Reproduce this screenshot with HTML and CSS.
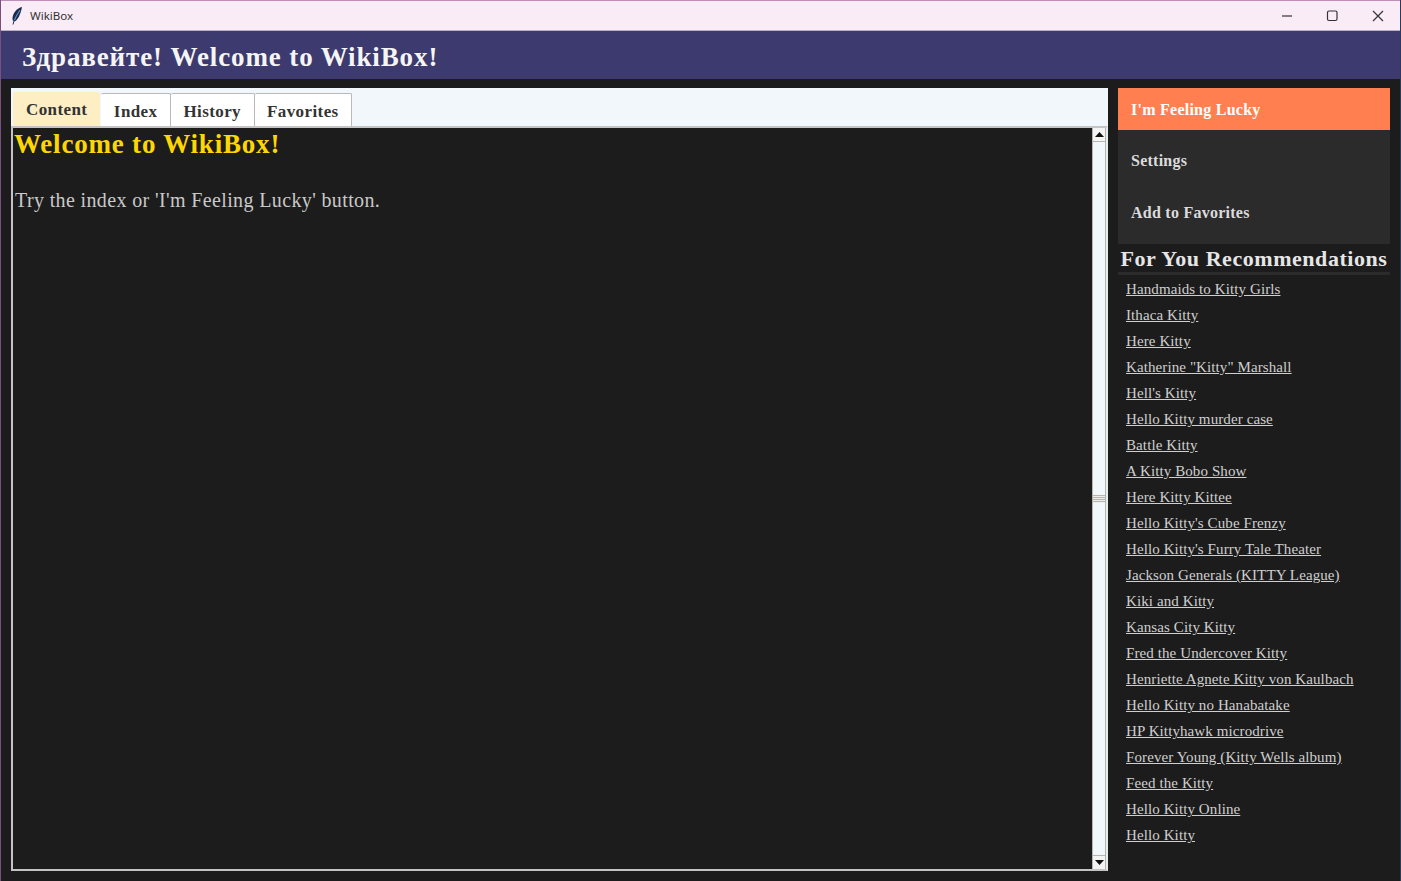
FILE: index.html
```html
<!DOCTYPE html>
<html lang="en">
<head>
<meta charset="utf-8">
<title>WikiBox</title>
<link rel="stylesheet" href="styles.css">
</head>
<body>
<div class="window">
  <div class="titlebar">
    <svg class="feather" width="12" height="18" viewBox="0 0 12 18"><path d="M11 0C6 1 2 6 1.500 11C1.400 12.500 1.800 13.500 2.500 14L1.500 17.500L2.500 17.500L3.300 14.500C6.500 13.500 9.500 8 11 0Z" fill="#1d2a4a"/><path d="M9 3C7 6 5 9 3.500 13" stroke="#5b8fd0" stroke-width="1.200" fill="none"/></svg>
    <span class="app-name">WikiBox</span>
    <div class="win-controls">
      <svg class="win-icon" width="46" height="30" viewBox="0 0 46 30"><path d="M20 15H30" stroke="#333" stroke-width="1.200"/></svg>
      <svg class="win-icon" width="46" height="30" viewBox="0 0 46 30"><rect x="19.500" y="10" width="9.500" height="9.500" rx="1.500" fill="none" stroke="#333" stroke-width="1.200"/></svg>
      <svg class="win-icon" width="46" height="30" viewBox="0 0 46 30"><path d="M19 10L29 20M29 10L19 20" stroke="#333" stroke-width="1.200"/></svg>
    </div>
  </div>
  <header class="banner">Здравейте! Welcome to WikiBox!</header>
  <main class="main">
    <section class="left">
      <nav class="tabs">
        <span class="tab active">Content</span>
        <span class="tab">Index</span>
        <span class="tab">History</span>
        <span class="tab">Favorites</span>
      </nav>
      <div class="content-frame">
        <div class="content">
          <h1 class="content-title">Welcome to WikiBox!</h1>
          <p class="content-text">Try the index or 'I'm Feeling Lucky' button.</p>
        </div>
        <div class="scrollbar">
          <div class="sb-btn"><svg width="9" height="5" viewBox="0 0 9 5"><path d="M4.500 0L9 5H0Z" fill="#111"/></svg></div>
          <div class="sb-track"><div class="sb-grip"></div></div>
          <div class="sb-btn"><svg width="9" height="5" viewBox="0 0 9 5"><path d="M0 0H9L4.500 5Z" fill="#111"/></svg></div>
        </div>
      </div>
    </section>
    <aside class="side">
      <div class="buttons">
        <a class="btn lucky">I'm Feeling Lucky</a>
        <a class="btn">Settings</a>
        <a class="btn">Add to Favorites</a>
      </div>
      <h2 class="rec-title">For You Recommendations</h2>
      <ul class="rec-list">
        <li>Handmaids to Kitty Girls</li>
        <li>Ithaca Kitty</li>
        <li>Here Kitty</li>
        <li>Katherine "Kitty" Marshall</li>
        <li>Hell's Kitty</li>
        <li>Hello Kitty murder case</li>
        <li>Battle Kitty</li>
        <li>A Kitty Bobo Show</li>
        <li>Here Kitty Kittee</li>
        <li>Hello Kitty's Cube Frenzy</li>
        <li>Hello Kitty's Furry Tale Theater</li>
        <li>Jackson Generals (KITTY League)</li>
        <li>Kiki and Kitty</li>
        <li>Kansas City Kitty</li>
        <li>Fred the Undercover Kitty</li>
        <li>Henriette Agnete Kitty von Kaulbach</li>
        <li>Hello Kitty no Hanabatake</li>
        <li>HP Kittyhawk microdrive</li>
        <li>Forever Young (Kitty Wells album)</li>
        <li>Feed the Kitty</li>
        <li>Hello Kitty Online</li>
        <li>Hello Kitty</li>
      </ul>
    </aside>
  </main>
</div>
</body>
</html>
```
FILE: styles.css
```css
* { box-sizing: border-box; }
html, body { margin: 0; padding: 0; height: 100%; overflow: hidden; background: #1c1c1c; }
body { font-family: "Liberation Serif", "DejaVu Serif", serif; }
.window { width: 1401px; height: 881px; display: flex; flex-direction: column; background: #1c1c1c; border-left: 1px solid #7a4f80; border-right: 1px solid #2a3a5a; }
.titlebar { height: 31px; flex: none; display: flex; align-items: center; background: #f9ecf6; border-top: 1px solid #c08cb8; border-bottom: 1px solid #b8b0c8; padding-left: 10px; font-family: "Noto Sans", "Open Sans", sans-serif; font-size: 11.500px; color: #333; }
.feather { flex: none; margin-right: 7px; }
.app-name { flex: 1; }
.win-controls { display: flex; }
.win-icon { display: block; }
.banner { height: 48px; flex: none; background: #3c3a6e; color: #f5f5f5; font-size: 27px; letter-spacing: 0.880px; font-weight: 700; line-height: 52px; padding-left: 21px; }
.main { flex: 1; display: flex; min-height: 0; padding: 9px 10px 10px 10px; gap: 10px; }
.left { flex: none; width: 1097px; background: #f1f7fb; display: flex; flex-direction: column; }
.tabs { height: 38px; flex: none; display: flex; align-items: flex-end; padding-left: 2px; }
.tab { height: 33px; padding: 0 12.500px; background: #fff; border: 1px solid #b9b9b9; border-bottom: none; border-left: none; border-radius: 2px 2px 0 0; color: #333; font-size: 17px; letter-spacing: 0.400px; font-weight: 700; line-height: 36px; }
.tab.active { height: 34px; background: #fdeec4; line-height: 36px; padding: 0 13px; border: none; margin-right: 1px; }
.content-frame { flex: 1; min-height: 0; display: flex; border: 2px solid #c4c4c4; border-right-color: #e6ecef; background: #1c1c1c; }
.content { flex: 1; min-width: 0; padding: 1px 0 0 2px; }
.content-title { margin: 0 0 0 -1px; color: #ffd700; font-size: 27px; letter-spacing: 0.800px; font-weight: 700; line-height: 31px; }
.content-text { margin: 25px 0 0; color: #c9c9c9; font-size: 20px; letter-spacing: 0.370px; line-height: 30px; }
.scrollbar { width: 14px; flex: none; display: flex; flex-direction: column; background: #f1f7fb; border-left: 1px solid #b5b5ad; border-right: 1px solid #b5b5ad; }
.sb-btn { height: 14px; flex: none; display: flex; align-items: center; justify-content: center; background: #f4f4f4; border-bottom: 1px solid #b5b5ad; }
.sb-btn:last-child { border-bottom: none; border-top: 1px solid #b5b5ad; }
.sb-track { flex: 1; display: flex; align-items: center; justify-content: center; }
.sb-grip { width: 100%; height: 8px; background: repeating-linear-gradient(#b5b5ad 0 1px, #eee 1px 2px); }
.side { flex: 1; min-width: 0; display: flex; flex-direction: column; }
.buttons { background: #2b2b2b; flex: none; height: 156px; }
.btn { display: block; height: 52px; padding-left: 13px; color: #dcdcdc; font-size: 16px; letter-spacing: 0.250px; font-weight: 700; line-height: 52px; }
.btn.lucky { height: 42px; line-height: 43px; background: #ff7f50; color: #fff; margin-bottom: 5px; }
.rec-title { margin: 0; height: 31px; color: #e6e6e6; font-size: 22px; letter-spacing: 0.550px; font-weight: 700; line-height: 30px; text-align: center; border-bottom: 3px solid #2b2b2b; white-space: nowrap; }
.rec-list { list-style: none; margin: 0; padding: 1px 0 0 8px; color: #cfcfcf; font-size: 15px; letter-spacing: 0.100px; line-height: 26px; text-decoration: underline; }
.rec-list li { height: 26px; white-space: nowrap; }
```
